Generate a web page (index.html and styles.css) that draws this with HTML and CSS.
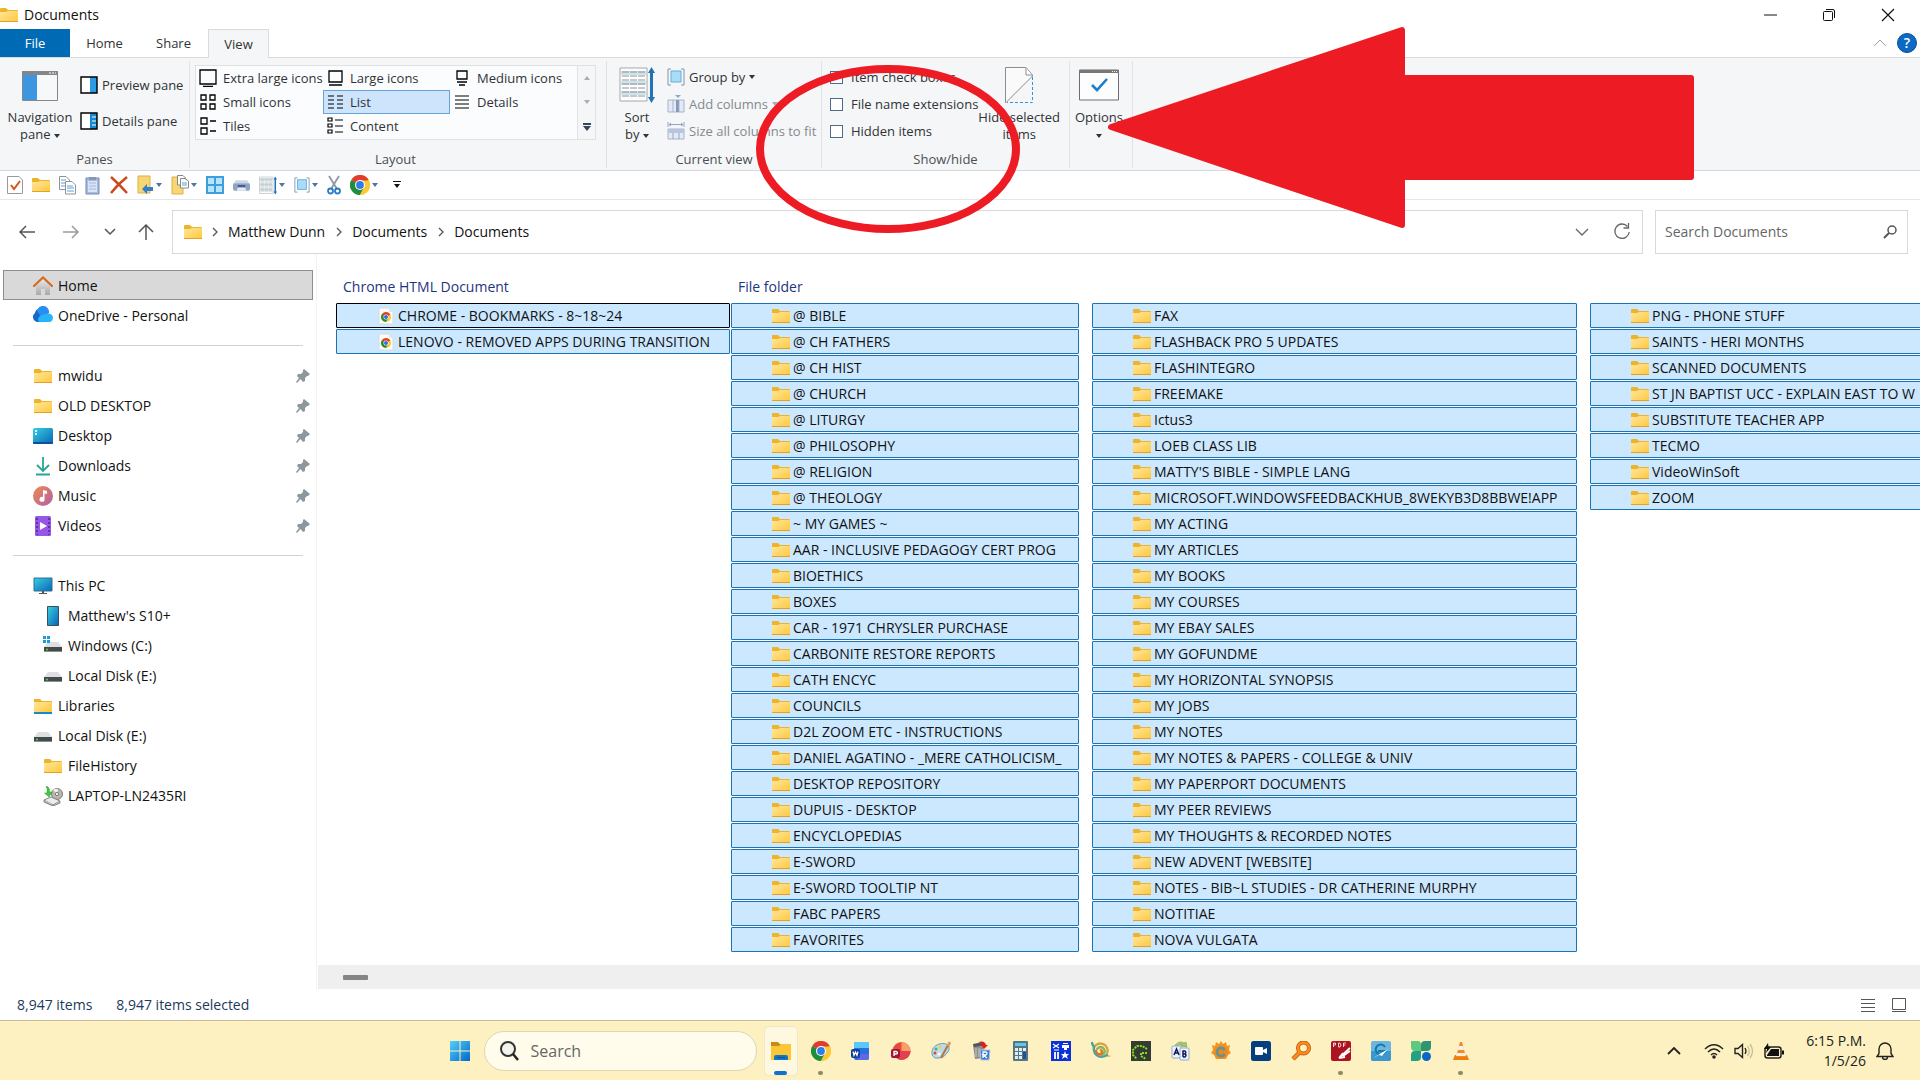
FILE: index.html
```html
<!DOCTYPE html>
<html lang="en">
<head>
<meta charset="utf-8">
<title>Documents</title>
<link rel="stylesheet" href="styles.css">
</head>
<body>
<svg class="defs" aria-hidden="true">
  <defs>
    <linearGradient id="gFolder" x1="0" y1="0" x2="1" y2="1"><stop offset="0" stop-color="#ffe69c"/><stop offset="1" stop-color="#ffc83c"/></linearGradient>
    <linearGradient id="gBlue" x1="0" y1="0" x2="1" y2="1"><stop offset="0" stop-color="#37d0e0"/><stop offset="1" stop-color="#0b63b8"/></linearGradient>
    <linearGradient id="gWin" x1="0" y1="0" x2="1" y2="1"><stop offset="0" stop-color="#55d0fb"/><stop offset="1" stop-color="#0067c8"/></linearGradient>
    <linearGradient id="gMusic" x1="0" y1="0" x2="1" y2="1"><stop offset="0" stop-color="#f08a4b"/><stop offset="1" stop-color="#b05fa8"/></linearGradient>
    <linearGradient id="gGrey" x1="0" y1="0" x2="0" y2="1"><stop offset="0" stop-color="#e8e8e8"/><stop offset="1" stop-color="#a9a9a9"/></linearGradient>
  </defs>
  <symbol id="folder" viewBox="0 0 18 16"><path d="M0 2Q0 1 1 1H6L8 3H17Q18 3 18 4V8H0Z" fill="#efb32a"/><path d="M0 5H6L8 4H18V14Q18 15 17 15H1Q0 15 0 14Z" fill="url(#gFolder)"/><path d="M0 14H18V15H0Z" fill="#e3a126"/></symbol>
  <symbol id="chrome" viewBox="0 0 20 20"><circle cx="10" cy="10" r="10" fill="#fcc934"/><path d="M10 10L1.3 5A10 10 0 0 1 18.7 5Z" fill="#e33b2e"/><path d="M10 10L1.3 5A10 10 0 0 0 10 20L14.3 12.5Z" fill="#1e8e3e"/><path d="M10 5.5H19A10 10 0 0 1 10 20L14 12Z" fill="#fcc934"/><circle cx="10" cy="10" r="5" fill="#fff"/><circle cx="10" cy="10" r="3.9" fill="#2f7de9"/></symbol>
  <symbol id="htmldoc" viewBox="0 0 16 18"><path d="M1 1H11L15 5V17H1Z" fill="#fbfbfb" stroke="#d5dbe0"/><path d="M11 1V5H15" fill="#e4e7ea"/><g transform="translate(3 5) scale(.5)"><circle cx="10" cy="10" r="10" fill="#fcc934"/><path d="M10 10L1.3 5A10 10 0 0 1 18.7 5Z" fill="#e33b2e"/><path d="M10 10L1.3 5A10 10 0 0 0 10 20L14 12Z" fill="#1e8e3e"/><circle cx="10" cy="10" r="5" fill="#fff"/><circle cx="10" cy="10" r="4" fill="#2f6fe0"/></g></symbol>
  <symbol id="pin" viewBox="0 0 14 14"><path d="M8 0L14 5L12 7L11 7L9 9L9 12L7 13L4.500 10L1 14L0 13L3 9L1 7L2 5L5 5L7 3L7 1Z" fill="#8d979e"/></symbol>
  <symbol id="drive" viewBox="0 0 20 20"><path d="M5 6H15L19 11H1Z" fill="#dedfe3"/><path d="M1 11H19V16H1Z" fill="#444a4a"/><path d="M1 15H19V16H1Z" fill="#8a8f8f"/><circle cx="4" cy="13.500" r="1" fill="#3ee053"/></symbol>
  <symbol id="down" viewBox="0 0 6 4"><path d="M0 0H6L3 4Z" fill="currentColor"/></symbol>
  <symbol id="chev" viewBox="0 0 12 12"><path d="M4 2L8 6L4 10" fill="none" stroke="#555" stroke-width="1.300"/></symbol>
  <symbol id="sort" viewBox="0 0 36 36"><path d="M1 1H28V34H1Z" fill="#fdfdfd" stroke="#a4a8ab"/><path d="M2 4H27V8H2ZM2 14H27V18H2ZM2 24H27V28H2Z" fill="#cfe3ea"/><path d="M3 5H26M3 9H26M3 13H26M3 17H26M3 21H26M3 25H26M3 29H26" stroke="#8c9499" stroke-dasharray="7 1"/><path d="M32.500 4V32" stroke="#2372b5" stroke-width="3"/><path d="M29 6L32.500 0L36 6ZM29 30L32.500 36L36 30Z" fill="#2372b5"/></symbol>
  <symbol id="group" viewBox="0 0 18 18"><path d="M4 1H1V17H4M14 1H17V17H14" fill="none" stroke="#8096aa"/><path d="M4 3H14V14H4Z" fill="#a7dcfb" stroke="#6aaad8"/></symbol>
</svg>

<header class="title-bar">
  <svg class="i18"><use href="#folder"/></svg>
  <h1>Documents</h1>
  <div class="window-buttons">
    <button aria-label="Minimize"><svg width="14" height="14"><path d="M1 7H14" stroke="#111"/></svg></button>
    <button aria-label="Restore"><svg width="14" height="14"><rect x="1.500" y="3.500" width="9" height="9" rx="1" fill="none" stroke="#111"/><path d="M4 1.500H11Q12.500 1.500 12.500 3V10" fill="none" stroke="#111"/></svg></button>
    <button aria-label="Close"><svg width="14" height="14"><path d="M1 1L13 13M13 1L1 13" stroke="#111" stroke-width="1.200"/></svg></button>
  </div>
</header>

<nav class="tabs">
  <button class="tab file">File</button>
  <button class="tab">Home</button>
  <button class="tab">Share</button>
  <button class="tab active">View</button>
  <div class="tab-tools">
    <button aria-label="Collapse ribbon"><svg width="14" height="10"><path d="M1 8L7 2L13 8" fill="none" stroke="#a0a0a0"/></svg></button>
    <button aria-label="Help"><svg width="20" height="20"><circle cx="10" cy="10" r="9.500" fill="#0a6ac4" stroke="#0a4f94"/><text x="10" y="15" text-anchor="middle" class="help-mark">?</text></svg></button>
  </div>
</nav>

<section class="ribbon">
  <div class="group panes">
    <div class="group-body">
      <button class="big">
        <svg width="36" height="30"><path d="M.5.5H35.500V29.500H.5Z" fill="#f7f8f9" stroke="#868686"/><path d="M0 0H36V4H0Z" fill="#868686"/><path d="M27 2H34" stroke="#fff" stroke-dasharray="2 1"/><path d="M1 4H15V29H1Z" fill="#3c97e0"/></svg>
        <span>Navigation<br>pane <svg class="arrow"><use href="#down"/></svg></span>
      </button>
      <div class="stack wide">
        <button class="line"><svg class="i18" viewBox="0 0 18 18"><path d="M1 1H17V17H1Z" fill="#fff"/><path d="M10 1H17V17H10Z" fill="#2b9be3"/><path d="M1 1H17V17H1Z" fill="none" stroke="#000" stroke-width="1.400"/></svg>Preview pane</button>
        <button class="line"><svg class="i18" viewBox="0 0 18 18"><path d="M1 1H17V17H1Z" fill="#fff"/><path d="M10 1H17V17H10Z" fill="#1689d3"/><path d="M12 5H16M12 9H16M12 13H16" stroke="#fff"/><path d="M1 1H17V17H1Z" fill="none" stroke="#000" stroke-width="1.400"/></svg>Details pane</button>
      </div>
    </div>
    <div class="group-name">Panes</div>
  </div>

  <div class="group layout">
    <div class="gallery">
      <div class="views">
        <button><svg class="i18" viewBox="0 0 18 18"><path d="M1 1H17V15H1ZM4 17.500H14" fill="none" stroke="#000" stroke-width="1.300"/></svg>Extra large icons</button>
        <button><svg class="i18" viewBox="0 0 18 18"><path d="M3 2H16V13H3ZM3 16H16" fill="none" stroke="#000" stroke-width="1.300"/></svg>Large icons</button>
        <button><svg class="i18" viewBox="0 0 18 18"><path d="M4 2H14V10H4ZM4 13H14M6 16H12" fill="none" stroke="#000" stroke-width="1.300"/></svg>Medium icons</button>
        <button><svg class="i18" viewBox="0 0 18 18"><path d="M2 2H7V7H2ZM11 2H16V7H11ZM2 11H7V16H2ZM11 11H16V16H11Z" fill="none" stroke="#000" stroke-width="1.300"/></svg>Small icons</button>
        <button class="selected"><svg class="i18" viewBox="0 0 18 18"><path d="M2 3H8M11 3H17M2 7H8M11 7H17M2 11H8M11 11H17M2 15H8M11 15H17" stroke="#000" stroke-width="1.200"/></svg>List</button>
        <button><svg class="i18" viewBox="0 0 18 18"><path d="M2 3H16M2 7H16M2 11H16M2 15H16" stroke="#000" stroke-width="1.200"/></svg>Details</button>
        <button><svg class="i18" viewBox="0 0 18 18"><path d="M2 1H8V7H2ZM11 4H17M2 11H8V17H2ZM11 14H17" fill="none" stroke="#000" stroke-width="1.300"/></svg>Tiles</button>
        <button><svg class="i18" viewBox="0 0 18 18"><path d="M2 1H6V4H2ZM2 7H6V10H2ZM2 13H6V16H2ZM9 3H17M9 9H17M9 15H17" fill="none" stroke="#000" stroke-width="1.200"/></svg>Content</button>
      </div>
      <div class="gallery-scroll">
        <button aria-label="Previous views"><svg class="arrow flip faint"><use href="#down"/></svg></button>
        <button aria-label="Next views"><svg class="arrow faint"><use href="#down"/></svg></button>
        <button aria-label="More views"><svg width="8" height="8"><path d="M0 0H8V2H0ZM0 3H8L4 8Z" fill="#34465c"/></svg></button>
      </div>
    </div>
    <div class="group-name">Layout</div>
  </div>

  <div class="group current">
    <div class="group-body">
      <button class="big">
        <svg width="36" height="36"><use href="#sort"/></svg>
        <span>Sort<br>by <svg class="arrow"><use href="#down"/></svg></span>
      </button>
      <div class="stack">
        <button class="line"><svg class="i18"><use href="#group"/></svg>Group by <svg class="arrow"><use href="#down"/></svg></button>
        <button class="line" disabled><svg class="i18" viewBox="0 0 18 18"><path d="M1 5H17V17H1Z" fill="#e4eaf5" stroke="#a5b3cc"/><path d="M9 5H12V17H9Z" fill="#8497b9"/><path d="M6 5V17M12 5V17" stroke="#a5b3cc"/><path d="M8 0H14L11 3Z" fill="#96a6c2"/></svg>Add columns <svg class="arrow faint"><use href="#down"/></svg></button>
        <button class="line" disabled><svg class="i18" viewBox="0 0 18 18"><path d="M1 7H17V17H1Z" fill="#e4eaf5" stroke="#a5b3cc"/><path d="M1 7H17V11H1Z" fill="#b9c5de"/><path d="M6 11V17M12 11V17M1 0V5M17 0V5M2 2.500H16M4 1L2 2.500L4 4M14 1L16 2.500L14 4" fill="none" stroke="#93a5c4"/></svg>Size all columns to fit</button>
      </div>
    </div>
    <div class="group-name">Current view</div>
  </div>

  <div class="group showhide">
    <div class="group-body">
      <div class="stack checks">
        <label><input type="checkbox">Item check boxes</label>
        <label><input type="checkbox">File name extensions</label>
        <label><input type="checkbox">Hidden items</label>
      </div>
      <button class="big">
        <svg width="28" height="36"><path d="M.5.5H21L27.500 8V9L1 35.500H.5Z" fill="#fafafa" stroke="#8d8d8d"/><path d="M21 1V8H27" fill="#fff" stroke="#8d8d8d"/><path d="M27.500 10V35.500H2" fill="none" stroke="#3a92d0" stroke-dasharray="3 2"/></svg>
        <span>Hide selected<br>items</span>
      </button>
    </div>
    <div class="group-name">Show/hide</div>
  </div>

  <div class="group options">
    <div class="group-body">
      <button class="big">
        <svg width="40" height="32"><path d="M.5 1H39.500V31H.5Z" fill="#fdfdfd" stroke="#6e6e6e"/><path d="M0 1H40V4H0Z" fill="#777"/><path d="M33 2.500H39" stroke="#eee" stroke-dasharray="1 1"/><path d="M13 16L18 21L28 10" fill="none" stroke="#1a7fd0" stroke-width="2.600"/></svg>
        <span>Options<br><svg class="arrow"><use href="#down"/></svg></span>
      </button>
    </div>
  </div>
</section>

<div class="quick">
  <button aria-label="Properties"><svg width="16" height="20"><path d="M.5 1.500H12L15.500 5V18.500H.5Z" fill="#fff" stroke="#999"/><path d="M4 10L7 14L13 6" fill="none" stroke="#d8531e" stroke-width="2"/></svg></button>
  <button aria-label="New folder"><svg width="18" height="16"><use href="#folder"/></svg></button>
  <button aria-label="Copy"><svg width="17" height="20"><path d="M.5 1.500H7L10.500 5V14.500H.5Z" fill="#fff" stroke="#8d9499"/><path d="M6.500 6.500H13L16.500 10V19H6.500Z" fill="#fff" stroke="#8d9499"/><path d="M2 5H7M2 8H6M2 11H6M8 11H14M8 13H15M8 16H15" stroke="#5e9fd6"/></svg></button>
  <button aria-label="Paste"><svg width="16" height="20"><path d="M1 3H14V19H1Z" fill="#a9bce0" stroke="#7389b5"/><path d="M3 6H12V17H3Z" fill="#dbe4f4"/><path d="M4 2H11V5H4Z" fill="#8797b5"/><path d="M4 8H11M4 11H11M4 14H11" stroke="#a7b8d5"/></svg></button>
  <button aria-label="Delete"><svg width="18" height="18"><path d="M1 1Q9 8 17 17M17 1Q8 8 1 17" fill="none" stroke="#cb4a1d" stroke-width="2.500"/></svg></button>
  <button aria-label="Move to" class="pair"><svg width="17" height="20"><path d="M1 1H13V18H1Z" fill="#f7d774" stroke="#dfb040"/><path d="M5 14L10 9V12H16V16H10V19Z" fill="#2f80c8"/></svg><svg class="arrow"><use href="#down"/></svg></button>
  <button aria-label="Copy to" class="pair"><svg width="18" height="20"><path d="M1 2H12V19H1Z" fill="#f7d774" stroke="#dfb040"/><path d="M6.500.5H12L14.500 3V10H6.500Z" fill="#fff" stroke="#888"/><path d="M9.500 3.500H14L17.500 6V13H9.500Z" fill="#fff" stroke="#888"/><path d="M11 8H16M11 10H16" stroke="#5e9fd6"/></svg><svg class="arrow"><use href="#down"/></svg></button>
  <button aria-label="Large icons"><svg width="18" height="18"><path d="M0 0H18V18H0Z" fill="#3d9fdb"/><path d="M2 2H8V8H2ZM10 2H16V8H10ZM2 10H8V16H2ZM10 10H16V16H10Z" fill="#b7e3fb"/></svg></button>
  <button aria-label="Drive"><svg width="17" height="13" viewBox="0 0 18 13"><path d="M3 1H15L17 4H1Z" fill="#cdd6e6"/><path d="M1 4H17Q18 4 18 6V10Q18 12 16 12H2Q0 12 0 10V6Q0 4 1 4Z" fill="#8fa3c8"/><path d="M5 6H13V8H5Z" fill="#44587c"/><path d="M5 9H13L14 12H4Z" fill="#e5ebf5"/></svg></button>
  <button aria-label="Sort by" class="pair"><svg width="18" height="19"><use href="#sort"/></svg><svg class="arrow"><use href="#down"/></svg></button>
  <button aria-label="Group by" class="pair"><svg width="16" height="18"><use href="#group"/></svg><svg class="arrow"><use href="#down"/></svg></button>
  <button aria-label="Cut"><svg width="14" height="20"><path d="M2 1L10 14M12 1L4 14" stroke="#8c9aa8" stroke-width="1.800"/><circle cx="3.500" cy="16" r="2.500" fill="none" stroke="#2b7bc6" stroke-width="1.800"/><circle cx="10.500" cy="16" r="2.500" fill="none" stroke="#2b7bc6" stroke-width="1.800"/></svg></button>
  <button aria-label="Chrome" class="pair"><svg width="20" height="20"><use href="#chrome"/></svg><svg class="arrow"><use href="#down"/></svg></button>
  <button aria-label="Customize toolbar" class="customize"><svg width="8" height="8"><path d="M0 0H8V1H0ZM1 3H7L4 7Z" fill="#111"/></svg></button>
</div>

<div class="address-row">
  <div class="history">
    <button aria-label="Back"><svg width="16" height="16"><path d="M16 8H1M7 2L1 8L7 14" fill="none" stroke="#555" stroke-width="1.500"/></svg></button>
    <button aria-label="Forward"><svg width="16" height="16"><path d="M0 8H15M9 2L15 8L9 14" fill="none" stroke="#999" stroke-width="1.500"/></svg></button>
    <button aria-label="Recent locations"><svg width="12" height="16"><path d="M1 5L6 10L11 5" fill="none" stroke="#555" stroke-width="1.500"/></svg></button>
    <button aria-label="Up"><svg width="16" height="16"><path d="M8 16V1M1 8L8 1L15 8" fill="none" stroke="#555" stroke-width="1.500"/></svg></button>
  </div>
  <div class="address">
    <svg class="i18"><use href="#folder"/></svg>
    <svg class="chev"><use href="#chev"/></svg><a href="#">Matthew Dunn</a>
    <svg class="chev"><use href="#chev"/></svg><a href="#">Documents</a>
    <svg class="chev"><use href="#chev"/></svg><a href="#">Documents</a>
    <div class="address-tools">
      <button aria-label="Previous locations"><svg width="14" height="10"><path d="M1 2L7 8L13 2" fill="none" stroke="#666" stroke-width="1.300"/></svg></button>
      <button aria-label="Refresh"><svg width="18" height="18"><path d="M14.500 3.500A7.200 7.200 0 1 0 16.200 9M15.500 0V5H10.500" fill="none" stroke="#666" stroke-width="1.300"/></svg></button>
    </div>
  </div>
  <form class="search-docs">
    <input type="text" placeholder="Search Documents" aria-label="Search Documents">
    <svg width="14" height="14"><circle cx="9" cy="5" r="4" fill="none" stroke="#555" stroke-width="1.500"/><path d="M6 8L1 13" stroke="#555" stroke-width="2"/></svg>
  </form>
</div>

<main>
  <aside>
    <a href="#" class="row current-row"><svg class="i20" viewBox="0 0 20 20"><path d="M3 9L10 3L17 9V19H12V13H8V19H3Z" fill="url(#gGrey)"/><path d="M1 10L10 1.500L19 10" fill="none" stroke="#d8691f" stroke-width="2.200" stroke-linecap="round"/></svg>Home</a>
    <a href="#" class="row"><svg class="i20" viewBox="0 0 20 20"><path d="M5 16A5 5 0 0 1 2 7A6 6 0 0 1 12 4L14 16Z" fill="#1467c8"/><path d="M4 5A6 6 0 0 1 16 7L9 12Z" fill="#2c8df0"/><path d="M6 16A4 4 0 0 1 7 10Q10 8 13 8Q18 6 20 11Q20 16 16 16Z" fill="#27b4fb"/></svg>OneDrive - Personal</a>
    <hr>
    <a href="#" class="row"><svg class="i20 fold"><use href="#folder"/></svg>mwidu<svg class="pin"><use href="#pin"/></svg></a>
    <a href="#" class="row"><svg class="i20 fold"><use href="#folder"/></svg>OLD DESKTOP<svg class="pin"><use href="#pin"/></svg></a>
    <a href="#" class="row"><svg class="i20" viewBox="0 0 20 20"><rect y="2" width="20" height="16" rx="1.500" fill="url(#gBlue)"/><path d="M2 4H4V6H2ZM2 7H4V9H2Z" fill="#d8fbff"/><path d="M0 16H20V17Q20 18 19 18H1Q0 18 0 17Z" fill="#0b5394"/></svg>Desktop<svg class="pin"><use href="#pin"/></svg></a>
    <a href="#" class="row"><svg class="i20" viewBox="0 0 20 20"><path d="M10 1V14M4 9L10 15L16 9M3 18.500H17" fill="none" stroke="#27a596" stroke-width="1.800"/></svg>Downloads<svg class="pin"><use href="#pin"/></svg></a>
    <a href="#" class="row"><svg class="i20" viewBox="0 0 20 20"><circle cx="10" cy="10" r="10" fill="url(#gMusic)"/><path d="M10 4L14 5V8L11.500 7.500V13A2.500 2.500 0 1 1 10 11Z" fill="#fff"/></svg>Music<svg class="pin"><use href="#pin"/></svg></a>
    <a href="#" class="row"><svg class="i20" viewBox="0 0 20 20"><rect x="2" width="16" height="20" rx="1.500" fill="#9656e8"/><path d="M4 2V19M16 2V19" stroke="#4c2496" stroke-width="1.500" stroke-dasharray="2 2"/><path d="M7 6L14 10L7 14Z" fill="#fff"/></svg>Videos<svg class="pin"><use href="#pin"/></svg></a>
    <hr>
    <a href="#" class="row"><svg class="i20" viewBox="0 0 20 20"><path d="M1 2H19V15H1Z" fill="url(#gBlue)" stroke="#2f6f93"/><path d="M9 15H11V17H14V18H6V17H9Z" fill="#555"/></svg>This PC</a>
    <a href="#" class="row sub"><svg class="i20" viewBox="0 0 20 20"><path d="M4.500.5H15.500V19.500H4.500Z" fill="url(#gBlue)" stroke="#3b4e5e"/></svg>Matthew's S10+</a>
    <a href="#" class="row sub"><svg class="i20" viewBox="0 0 20 20"><use href="#drive"/><path d="M0 0H3V3H0ZM4 0H7V3H4ZM0 4H3V7H0ZM4 4H7V7H4Z" fill="#1a9bdc"/></svg>Windows (C:)</a>
    <a href="#" class="row sub"><svg class="i20"><use href="#drive"/></svg>Local Disk (E:)</a>
    <a href="#" class="row"><svg class="i20" viewBox="0 0 20 20"><path d="M1 3H7L9 5H19V12H1Z" fill="#efb32a"/><path d="M1 6H19V16H1Z" fill="url(#gFolder)"/><path d="M1 16H19V18H1Z" fill="#1689c8"/></svg>Libraries</a>
    <a href="#" class="row"><svg class="i20"><use href="#drive"/></svg>Local Disk (E:)</a>
    <a href="#" class="row sub"><svg class="i20 fold"><use href="#folder"/></svg>FileHistory</a>
    <a href="#" class="row sub"><svg class="i20" viewBox="0 0 20 20"><circle cx="14" cy="8" r="5.500" fill="#b9b7ae" stroke="#7c7c78"/><path d="M14 8L10 4A6 6 0 0 1 15 3Z" fill="#f2f0e8"/><circle cx="14" cy="8" r="1.600" fill="#fff" stroke="#777"/><path d="M1 14L8 11L17 15L10 19Z" fill="#ececec" stroke="#858585"/><path d="M1 14V16L10 20V18M17 15V17L10 20" fill="#bbb" stroke="#858585"/><path d="M3 0Q7 1 6.500 6H9L6 11L1.500 7H4Q5 3 3 0Z" fill="#3fcb3f" stroke="#2a9a2a" stroke-width=".5"/></svg>LAPTOP-LN2435RI</a>
  </aside>

  <div class="files">
    <div class="file-groups">
      <section class="file-group c1">
        <h2>Chrome HTML Document</h2>
        <ul>
          <li class="focus"><svg><use href="#htmldoc"/></svg>CHROME - BOOKMARKS - 8~18~24</li>
          <li><svg><use href="#htmldoc"/></svg>LENOVO - REMOVED APPS DURING TRANSITION</li>
        </ul>
      </section>
      <section class="file-group rest">
        <h2>File folder</h2>
        <div class="columns">
          <ul class="c2">
            <li><svg><use href="#folder"/></svg>@ BIBLE</li>
            <li><svg><use href="#folder"/></svg>@ CH FATHERS</li>
            <li><svg><use href="#folder"/></svg>@ CH HIST</li>
            <li><svg><use href="#folder"/></svg>@ CHURCH</li>
            <li><svg><use href="#folder"/></svg>@ LITURGY</li>
            <li><svg><use href="#folder"/></svg>@ PHILOSOPHY</li>
            <li><svg><use href="#folder"/></svg>@ RELIGION</li>
            <li><svg><use href="#folder"/></svg>@ THEOLOGY</li>
            <li><svg><use href="#folder"/></svg>~ MY GAMES ~</li>
            <li><svg><use href="#folder"/></svg>AAR - INCLUSIVE PEDAGOGY CERT PROG</li>
            <li><svg><use href="#folder"/></svg>BIOETHICS</li>
            <li><svg><use href="#folder"/></svg>BOXES</li>
            <li><svg><use href="#folder"/></svg>CAR - 1971 CHRYSLER PURCHASE</li>
            <li><svg><use href="#folder"/></svg>CARBONITE RESTORE REPORTS</li>
            <li><svg><use href="#folder"/></svg>CATH ENCYC</li>
            <li><svg><use href="#folder"/></svg>COUNCILS</li>
            <li><svg><use href="#folder"/></svg>D2L ZOOM ETC - INSTRUCTIONS</li>
            <li><svg><use href="#folder"/></svg>DANIEL AGATINO - _MERE CATHOLICISM_</li>
            <li><svg><use href="#folder"/></svg>DESKTOP REPOSITORY</li>
            <li><svg><use href="#folder"/></svg>DUPUIS - DESKTOP</li>
            <li><svg><use href="#folder"/></svg>ENCYCLOPEDIAS</li>
            <li><svg><use href="#folder"/></svg>E-SWORD</li>
            <li><svg><use href="#folder"/></svg>E-SWORD TOOLTIP NT</li>
            <li><svg><use href="#folder"/></svg>FABC PAPERS</li>
            <li><svg><use href="#folder"/></svg>FAVORITES</li>
          </ul>
          <ul class="c3">
            <li><svg><use href="#folder"/></svg>FAX</li>
            <li><svg><use href="#folder"/></svg>FLASHBACK PRO 5 UPDATES</li>
            <li><svg><use href="#folder"/></svg>FLASHINTEGRO</li>
            <li><svg><use href="#folder"/></svg>FREEMAKE</li>
            <li><svg><use href="#folder"/></svg>Ictus3</li>
            <li><svg><use href="#folder"/></svg>LOEB CLASS LIB</li>
            <li><svg><use href="#folder"/></svg>MATTY'S BIBLE - SIMPLE LANG</li>
            <li><svg><use href="#folder"/></svg>MICROSOFT.WINDOWSFEEDBACKHUB_8WEKYB3D8BBWE!APP</li>
            <li><svg><use href="#folder"/></svg>MY ACTING</li>
            <li><svg><use href="#folder"/></svg>MY ARTICLES</li>
            <li><svg><use href="#folder"/></svg>MY BOOKS</li>
            <li><svg><use href="#folder"/></svg>MY COURSES</li>
            <li><svg><use href="#folder"/></svg>MY EBAY SALES</li>
            <li><svg><use href="#folder"/></svg>MY GOFUNDME</li>
            <li><svg><use href="#folder"/></svg>MY HORIZONTAL SYNOPSIS</li>
            <li><svg><use href="#folder"/></svg>MY JOBS</li>
            <li><svg><use href="#folder"/></svg>MY NOTES</li>
            <li><svg><use href="#folder"/></svg>MY NOTES &amp; PAPERS - COLLEGE &amp; UNIV</li>
            <li><svg><use href="#folder"/></svg>MY PAPERPORT DOCUMENTS</li>
            <li><svg><use href="#folder"/></svg>MY PEER REVIEWS</li>
            <li><svg><use href="#folder"/></svg>MY THOUGHTS &amp; RECORDED NOTES</li>
            <li><svg><use href="#folder"/></svg>NEW ADVENT [WEBSITE]</li>
            <li><svg><use href="#folder"/></svg>NOTES - BIB~L STUDIES - DR CATHERINE MURPHY</li>
            <li><svg><use href="#folder"/></svg>NOTITIAE</li>
            <li><svg><use href="#folder"/></svg>NOVA VULGATA</li>
          </ul>
          <ul class="c4">
            <li><svg><use href="#folder"/></svg>PNG - PHONE STUFF</li>
            <li><svg><use href="#folder"/></svg>SAINTS - HERI MONTHS</li>
            <li><svg><use href="#folder"/></svg>SCANNED DOCUMENTS</li>
            <li><svg><use href="#folder"/></svg>ST JN BAPTIST UCC - EXPLAIN EAST TO W</li>
            <li><svg><use href="#folder"/></svg>SUBSTITUTE TEACHER APP</li>
            <li><svg><use href="#folder"/></svg>TECMO</li>
            <li><svg><use href="#folder"/></svg>VideoWinSoft</li>
            <li><svg><use href="#folder"/></svg>ZOOM</li>
          </ul>
        </div>
      </section>
    </div>
    <div class="scrollbar"><div class="thumb"></div></div>
  </div>
</main>

<footer class="status">
  <span>8,947 items</span>
  <span>8,947 items selected</span>
  <div class="status-tools">
    <button aria-label="Details view"><svg width="14" height="14"><path d="M0 1.500H14M0 5.500H14M0 9.500H14M0 13.500H14" stroke="#555"/></svg></button>
    <button aria-label="Large icons view"><svg width="14" height="14"><path d="M.5.5H13.500V11.500H.5ZM0 13.500H14" fill="none" stroke="#555"/></svg></button>
  </div>
</footer>

<div class="taskbar">
  <div class="taskbar-main">
    <button class="start" aria-label="Start"><svg width="20" height="20"><path d="M0 0H9.500V9.500H0ZM10.500 0H20V9.500H10.500ZM0 10.500H9.500V20H0ZM10.500 10.500H20V20H10.500Z" fill="url(#gWin)"/></svg></button>
    <label class="task-search">
      <svg width="20" height="20"><circle cx="9" cy="8" r="7" fill="#f3f3ee" stroke="#333" stroke-width="2"/><path d="M14 13L19 19" stroke="#222" stroke-width="2.500"/></svg>
      <input type="text" placeholder="Search" aria-label="Search">
    </label>
    <div class="apps">
      <button class="app open" aria-label="File Explorer"><svg viewBox="0 0 20 20"><path d="M0 1H7L9 3H20V9H0Z" fill="#c98c12"/><path d="M0 5H8L10 3H20V19H0Z" fill="#fcc737"/><path d="M3 19V16Q3 14 5 14H15Q17 14 17 16V19Z" fill="#1275c4"/><path d="M6 16H14V17H6Z" fill="#0d4e8c"/></svg></button>
      <button class="app run" aria-label="Chrome"><svg><use href="#chrome"/></svg></button>
      <button class="app" aria-label="Word"><svg viewBox="0 0 20 20"><rect x="3" y="1" width="15" height="18" rx="2" fill="#2a6fdf"/><path d="M3 7V3Q3 1 5 1H16Q18 1 18 3V7Z" fill="#5ac8fa"/><path d="M7 13H18V17Q18 19 16 19H7Z" fill="#5b6be8"/><rect x="0" y="8" width="9" height="9" rx="2" fill="#123f9c"/><path d="M2 10.500L3 14.500L4.500 11L6 14.500L7 10.500" fill="none" stroke="#fff" stroke-width="1.200"/></svg></button>
      <button class="app" aria-label="PowerPoint"><svg viewBox="0 0 20 20"><circle cx="10.500" cy="10" r="9" fill="#e8493a"/><path d="M10.500 1A9 9 0 0 1 19.500 10H10.500Z" fill="#f9a06a"/><path d="M10.500 10H19.500A9 9 0 0 1 8 18.500Z" fill="#e23f4f"/><rect y="8" width="9" height="9" rx="2" fill="#a01638"/><path d="M3 15V10.500H5Q6.500 10.500 6.500 12Q6.500 13 5 13H3" fill="none" stroke="#fff" stroke-width="1.300"/></svg></button>
      <button class="app" aria-label="Paint"><svg viewBox="0 0 20 20"><path d="M1 13Q0 6 8 3Q16 1 18 6Q19 9 16 12Q13 17 8 17Q2 18 1 13Z" fill="#bcdcec" stroke="#6d9db5"/><circle cx="5" cy="8" r="1.500" fill="#52b15e"/><circle cx="9" cy="6" r="1.500" fill="#f3ce46"/><circle cx="4" cy="12" r="1.500" fill="#d94b3f"/><circle cx="8" cy="13" r="1.500" fill="#fff"/><path d="M17 4L10 17" stroke="#b5763d" stroke-width="2"/><path d="M19 1L17 5" stroke="#d9a068" stroke-width="3"/></svg></button>
      <button class="app" aria-label="Revo Uninstaller"><svg viewBox="0 0 20 20"><path d="M2 4L13 3L12 17L4 18Z" fill="#8d8d8d"/><path d="M2 3L12 1L14 4L3 6Z" fill="#555"/><path d="M5 7V16M8 7V16" stroke="#ccc"/><path d="M7 1Q14-1 15 4H17L13 8L10 4H12Q11 2 7 1Z" fill="#e02020"/><path d="M9 9H19L18 19H10Z" fill="#3e78ca" stroke="#a8c8f0"/><path d="M12 17V11H15Q17 12 15 14H12L16 17" fill="none" stroke="#fff" stroke-width="1.300"/></svg></button>
      <button class="app" aria-label="Calculator"><svg viewBox="0 0 20 20"><rect x="2" width="15" height="20" rx="1" fill="#5a7582"/><path d="M4 2H15V5H4Z" fill="#5cc8ee"/><path d="M4 7H7V10H4ZM8 7H11V10H8ZM12 7H15V10H12ZM4 11H7V14H4ZM8 11H11V14H8ZM4 15H7V18H4ZM8 15H11V18H8Z" fill="#e2edf1"/><path d="M12 11H15V18H12Z" fill="#18539c"/></svg></button>
      <button class="app" aria-label="Tools"><svg viewBox="0 0 20 20"><path d="M0 0H20V20H0Z" fill="#0a32d8"/><path d="M2 3L8 7M8 3L2 7M3 9H8" fill="none" stroke="#fff" stroke-width="1.200"/><path d="M11 4H18V7H16V9H13V7H11ZM12 2H17V3H12Z" fill="#fff"/><path d="M4 11V18M7 11V18" stroke="#fff" stroke-width="1.800"/><path d="M14 10L15 13H18L15.800 15L17 18L14 16L11 18L12 15L10 13H13Z" fill="#fff"/></svg></button>
      <button class="app" aria-label="Swirl"><svg viewBox="0 0 20 20"><g fill="none" stroke-width="2.400" stroke-linecap="round"><path d="M3 6Q8 0 14 4Q18 8 16 12" stroke="#d9a441"/><path d="M16 12Q14 16 19 15" stroke="#e3b04a" stroke-width="1.200"/><path d="M1 2Q2 5 3 6Q2 12 7 15Q11 17 16 14" stroke="#4aa3a0"/><path d="M6 8Q10 4 13 8Q15 12 11 14" stroke="#86b85a"/><path d="M5 10Q6 14 10 13Q12 11 10 9" stroke="#e37228"/></g></svg></button>
      <button class="app" aria-label="Greenshot"><svg viewBox="0 0 20 20"><path d="M0 0H20V20H0Z" fill="#353a35"/><path d="M16 8L11 5H6L2 9V14L6 18M16 12H10V15L15 18" fill="none" stroke="#7fe01a" stroke-width="2" stroke-dasharray="2 1"/></svg></button>
      <button class="app" aria-label="Rename"><svg viewBox="0 0 20 20"><path d="M4 4Q9-1 13 2L15 1L16 6L10 5L12 4Q8 3 6 6Z" fill="#9dc878" stroke="#689748" stroke-width=".5"/><rect x="1" y="5" width="9" height="12" rx="1" fill="#eef4ff" stroke="#91a9d0"/><rect x="9" y="7" width="9" height="12" rx="1" fill="#eef4ff" stroke="#91a9d0"/><path d="M3 14L5.500 8L8 14M4 12H7M12 16V10H14Q15.500 11 14 13H12M14 13Q16 14 14 16H12" fill="none" stroke="#111a55" stroke-width="1.500"/></svg></button>
      <button class="app" aria-label="Copernic"><svg viewBox="0 0 20 20"><path d="M1 4L4 5L5 1L8 3L10 0L12 3L15 1L16 5L19 4L18 9L20 12L17 14L15 18H5L3 14L0 12L2 9Z" fill="#f29422"/><circle cx="10" cy="11" r="6.500" fill="#e58a25"/><path d="M13.500 9A4 4 0 1 0 13.500 13" fill="none" stroke="#5b93a0" stroke-width="2.500"/></svg></button>
      <button class="app" aria-label="Video"><svg viewBox="0 0 20 20"><rect width="20" height="20" rx="2.500" fill="#063f80"/><rect x="4" y="6" width="8" height="8" rx="1" fill="#fff"/><path d="M12 9L16 7V13L12 11Z" fill="#fff"/></svg></button>
      <button class="app" aria-label="Search everything"><svg viewBox="0 0 20 20"><circle cx="12.500" cy="7" r="5.500" fill="none" stroke="#b3550c" stroke-width="4"/><path d="M8.500 11.500L2 18" stroke="#b3550c" stroke-width="4.500"/><circle cx="12.500" cy="7" r="5.500" fill="none" stroke="#ff8a18" stroke-width="2.600"/><path d="M8.500 11.500L2 18" stroke="#ff8a18" stroke-width="3"/></svg></button>
      <button class="app run" aria-label="PDF"><svg viewBox="0 0 20 20"><rect width="20" height="20" rx="2" fill="#ad1220"/><path d="M2.500 6V2H4.500V4H2.500M7.500 2V6H9L10 4L9 2ZM12.500 6V2H15M12.500 4H14.500" fill="none" stroke="#fff" stroke-width=".8"/><path d="M8 17L19 7M8 17L12 12M8 17L14 16M12 15L19 10" stroke="#fff" stroke-width="1.800"/></svg></button>
      <button class="app" aria-label="OpenOffice"><svg viewBox="0 0 20 20"><rect width="20" height="20" rx="2" fill="#6ab6de"/><path d="M0 10H20V18Q20 20 18 20H2Q0 20 0 18Z" fill="#3c97cf"/><path d="M14 6A5 5 0 1 0 14.500 10H7" fill="none" stroke="#1976ac" stroke-width="2"/><path d="M2 17L17 8L11 15L8 14Z" fill="#f4fbff"/></svg></button>
      <button class="app" aria-label="Clover"><svg viewBox="0 0 20 20"><path d="M0 0H7Q10 0 10 4V10H4Q0 10 0 6Z" fill="#5dc87e"/><path d="M20 0H14Q10 0 10 4V10H16Q20 10 20 6Z" fill="#2f9473"/><path d="M0 20H6Q10 20 10 16V10H4Q0 10 0 14Z" fill="#23a184"/><circle cx="15.500" cy="15.500" r="4.500" fill="#0a66c8"/></svg></button>
      <button class="app run" aria-label="VLC"><svg viewBox="0 0 20 20"><path d="M4 14H16L18 19H2Z" fill="#ee7d10"/><path d="M9 1H11L15 16H5Z" fill="#f68a1c"/><path d="M7.800 5H12.200L13.400 9H6.600ZM5.800 12H14.200L15 15H5Z" fill="#f3f0ea"/></svg></button>
    </div>
  </div>
  <div class="tray">
    <button aria-label="Show hidden icons"><svg width="14" height="10"><path d="M1 8L7 2L13 8" fill="none" stroke="#222" stroke-width="1.800"/></svg></button>
    <button class="net" aria-label="Network, volume and battery">
      <svg width="20" height="16"><path d="M1 6Q10-2.500 19 6M4 9Q10 3 16 9M7 12Q10 9 13 12" fill="none" stroke="#222" stroke-width="1.500"/><circle cx="10" cy="14" r="1.800" fill="#222"/></svg>
      <svg width="20" height="16"><path d="M1 5.500H4L8.500 1.500V14.500L4 10.500H1Z" fill="none" stroke="#222" stroke-width="1.400"/><path d="M11 5Q13 8 11 11" fill="none" stroke="#222" stroke-width="1.300"/><path d="M13.500 3Q17 8 13.500 13M16 1Q21 8 16 15" fill="none" stroke="#c6bd93" stroke-width="1.300"/></svg>
      <svg width="20" height="16"><rect x="1" y="4" width="16" height="11" rx="2.500" fill="none" stroke="#222" stroke-width="1.500"/><path d="M3 12L7 6H15V13H3Z" fill="#111"/><path d="M18 7.500H20V11.500H18Z" fill="#111"/><path d="M4 0L0 6H3L2 10L7 4H4.500Z" fill="#111"/></svg>
    </button>
    <time>6:15 P.M.<br>1/5/26</time>
    <button aria-label="Notifications"><svg width="18" height="18"><path d="M1 14.500H17L15 11.500V7A6 6 0 0 0 3 7V11.500ZM6.500 15A2.500 2.500 0 0 0 11.500 15" fill="none" stroke="#222" stroke-width="1.400"/></svg></button>
  </div>
</div>

<svg class="mark circle-mark" width="266" height="168"><ellipse cx="133" cy="84" rx="128" ry="80" fill="none" stroke="#ed1c24" stroke-width="8"/></svg>
<svg class="mark arrow-mark" width="588" height="204"><path d="M3 101L294 4V52H583V151H294V199Z" fill="#ed1c24" stroke="#ed1c24" stroke-width="6" stroke-linejoin="round"/></svg>
</body>
</html>
```
FILE: styles.css
```css
* { box-sizing: border-box; }

body {
  position: relative;
  display: flex;
  flex-direction: column;
  min-height: 100vh;
  margin: 0;
  overflow-x: hidden;
  background: #fff;
  color: #111;
  font: 14px/20px "Open Sans", "Noto Sans", sans-serif;
}

h1, h2, ul { margin: 0; padding: 0; font-size: 14px; font-weight: 400; }
ul { list-style: none; }
a { color: inherit; text-decoration: none; }
svg { display: block; flex: none; }
input { font: inherit; color: inherit; }
button {
  display: flex;
  align-items: center;
  margin: 0;
  padding: 0;
  border: 0;
  background: none;
  color: inherit;
  font: inherit;
}

.defs { position: absolute; width: 0; height: 0; }
.i18 { width: 18px; height: 18px; }
.i20 { width: 20px; height: 20px; }
.fold { padding: 1px; }
.arrow { display: inline-block; width: 6px; height: 4px; vertical-align: middle; }
.faint { color: #a8adb3; }
.flip { transform: rotate(180deg); }

/* Title bar */
.title-bar { display: flex; align-items: center; gap: 6px; height: 29px; }
.window-buttons { display: flex; gap: 45px; margin-left: auto; padding-right: 25px; }

/* Tabs */
.tabs { display: flex; height: 28px; color: #333; font-size: 13px; }
.tab { justify-content: center; width: 69px; }
.tab.file { width: 70px; background: #006ab4; color: #fff; }
.tab.active {
  position: relative;
  width: 61px;
  height: 29px;
  border: 1px solid #dadbdc;
  border-bottom: 0;
  background: #f5f6f7;
}
.tab-tools { display: flex; gap: 10px; margin-left: auto; padding-right: 3px; }
.help-mark { fill: #fff; font-size: 14px; font-weight: 600; }

/* Ribbon */
.ribbon {
  display: flex;
  height: 114px;
  padding: 3px 0 2px;
  border-top: 1px solid #dadbdc;
  border-bottom: 1px solid #d5d8dc;
  background: #f5f6f7;
  color: #2f3338;
  font-size: 13px;
}
.group { display: flex; flex-direction: column; justify-content: space-between; border-right: 1px solid #e1e2e4; }
.group-body { display: flex; align-items: flex-start; height: 86px; padding-top: 6px; }
.group-name { height: 18px; line-height: 18px; text-align: center; color: #4a4e54; }
.panes { width: 190px; }
.layout { width: 417px; padding: 4px 10px 0 5px; }
.current { width: 215px; }
.showhide { width: 248px; }
.options { width: 63px; }
.big { flex-direction: column; justify-content: space-between; height: 76px; line-height: 17px; text-align: center; }
.panes .big { width: 80px; padding-top: 4px; }
.current .big { width: 60px; }
.options .big { width: 58px; padding-top: 2px; }
.showhide .big { margin-left: auto; padding-right: 9px; white-space: nowrap; }
.stack { display: flex; flex-direction: column; gap: 7px; }
.wide { gap: 16px; padding-top: 8px; }
.line { gap: 4px; height: 20px; white-space: nowrap; }
.line:disabled { color: #85898f; }
.checks { padding-left: 8px; }
.checks label { display: flex; align-items: center; gap: 8px; height: 20px; white-space: nowrap; }
.checks input {
  appearance: none;
  width: 13px;
  height: 13px;
  margin: 0;
  border: 1px solid #4e6a8e;
  background: #fff;
}
.gallery { display: flex; height: 75px; border: 1px solid #dfe1e3; background: #fbfcfd; }
.views { display: grid; flex: 1; grid-template-columns: 127px 127px 127px; grid-template-rows: 24px 24px 24px; }
.views button { gap: 6px; padding-left: 2px; border: 1px solid transparent; white-space: nowrap; }
.views .selected { border-color: #66a3da; background: #cde4fc; }
.gallery-scroll { display: flex; flex-direction: column; width: 18px; border-left: 1px solid #dfe1e3; background: #f5f6f7; }
.gallery-scroll button { flex: 1; justify-content: center; }

/* Quick access toolbar */
.quick { display: flex; align-items: center; gap: 9px; height: 29px; padding-left: 7px; border-bottom: 1px solid #e6e7e8; }
.pair { gap: 2px; color: #4f74a3; }
.customize { padding-left: 6px; }

/* Address row */
.address-row { display: flex; padding: 10px 12px 0 0; }
.history { display: grid; grid-template-columns: 44px 41px 34px 16px; width: 172px; padding-left: 19px; }
.address {
  display: flex;
  flex: 1;
  align-items: center;
  gap: 7px;
  height: 44px;
  padding-left: 11px;
  border: 1px solid #d9d9d9;
}
.address a { padding-right: 1px; }
.chev { width: 12px; height: 12px; }
.address-tools { display: flex; align-items: center; gap: 24px; margin-left: auto; padding-right: 11px; }
.search-docs {
  display: flex;
  align-items: center;
  width: 253px;
  margin-left: 12px;
  padding: 0 10px 0 9px;
  border: 1px solid #d9d9d9;
}
.search-docs input { flex: 1; min-width: 0; padding: 0; border: 0; }
input::placeholder { color: #666; opacity: 1; }

/* Main area */
main { display: flex; flex: 1; }
aside { width: 317px; padding: 16px 3px 0; border-right: 1px solid #f3f3f3; }
.row { display: flex; align-items: center; gap: 5px; height: 30px; padding: 1px 3px 0 30px; }
.row.sub { padding-left: 40px; }
.row.current-row { padding-left: 29px; border: 1px solid #8e8e8e; background: #d9d9d9; }
.pin { width: 14px; height: 14px; margin-left: auto; }
aside hr { height: 1px; margin: 15px 10px 14px; border: 0; background: #d2d2d2; }
.files { display: flex; flex: 1; flex-direction: column; justify-content: space-between; min-width: 0; padding-left: 1px; }
.file-groups { display: flex; gap: 1px; padding: 23px 0 0 18px; overflow: hidden; }
.file-group h2 { height: 26px; padding-left: 7px; color: #1f3480; }
.columns { display: flex; gap: 13px; }
.c1 { flex: none; width: 394px; }
.rest { flex: 1; min-width: 0; }
.c2, .c3, .c4 { flex: none; }
.c2 { width: 348px; }
.c3 { width: 485px; }
.c4 { width: 480px; }
.file-groups ul { display: flex; flex-direction: column; gap: 1px; }
.file-groups li {
  display: flex;
  align-items: center;
  gap: 3px;
  height: 25px;
  padding-left: 40px;
  border: 1px solid #1a73b5;
  border-radius: 1px;
  background: #cce8ff;
  white-space: nowrap;
}
.file-groups li.focus { border-color: #000; }
.file-groups li svg { width: 18px; height: 18px; }
.scrollbar { display: flex; align-items: center; height: 24px; padding-left: 25px; background: #efefef; }
.thumb { width: 25px; height: 5px; border-radius: 1px; background: #858585; }

/* Status bar */
.status { display: flex; align-items: center; gap: 24px; height: 31px; padding: 0 14px 0 17px; color: #1e395b; }
.status-tools { display: flex; gap: 17px; margin-left: auto; }

/* Taskbar */
.taskbar { display: flex; align-items: center; height: 60px; border-top: 1px solid #c5bd98; background: #fdf1c1; color: #222; }
.taskbar-main { display: flex; flex: 1; align-items: center; justify-content: center; padding-left: 263px; }
.start { margin-right: 14px; }
.task-search {
  display: flex;
  align-items: center;
  gap: 12px;
  width: 273px;
  height: 40px;
  padding: 0 14px;
  border: 1px solid #ddd6b0;
  border-radius: 20px;
  background: #fffcec;
}
.task-search input { flex: 1; min-width: 0; padding: 0; border: 0; background: none; font-size: 16px; }
.apps { display: flex; margin-left: 4px; }
.app { position: relative; justify-content: center; width: 40px; height: 50px; }
.app svg { width: 20px; height: 20px; }
.app.open::before { content: ""; position: absolute; inset: 0 3px; border: 1px solid #f0e8c6; border-radius: 5px; background: #fff8e0; }
.app.open svg { position: relative; }
.app.open::after, .app.run::after { content: ""; position: absolute; bottom: 1px; width: 5px; height: 4px; border-radius: 2px; background: #8f8a66; }
.app.open::after { width: 13px; background: #0f71c9; }
.tray { display: flex; align-items: center; padding-right: 26px; }
.net { gap: 10px; margin-left: 23px; }
time { width: 82px; line-height: 20px; text-align: right; }
.tray time + button { margin-left: 10px; }

/* Annotations drawn over the window */
.mark { position: absolute; pointer-events: none; }
.circle-mark { left: 755px; top: 65px; }
.arrow-mark { left: 1108px; top: 26px; }
```
